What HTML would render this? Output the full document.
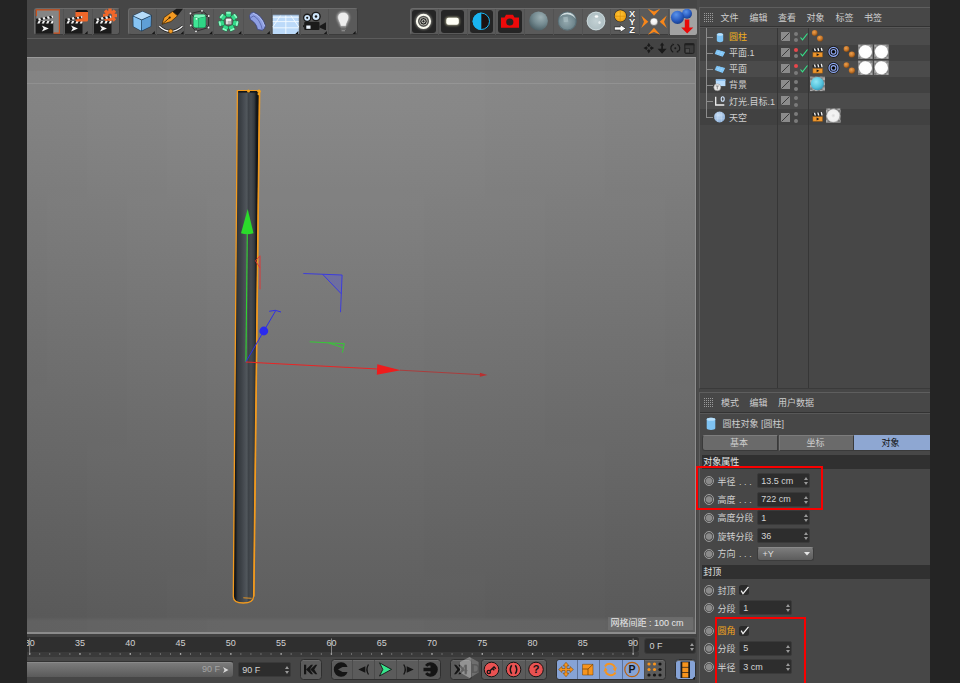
<!DOCTYPE html>
<html lang="zh">
<head>
<meta charset="utf-8">
<title>C4D</title>
<style>
*{box-sizing:border-box;margin:0;padding:0}
html,body{width:960px;height:683px;overflow:hidden;background:#242424}
body{position:relative;font-family:"Liberation Sans","Noto Sans CJK SC",sans-serif;font-size:9px;color:#cdcdcd;line-height:1}
.abs{position:absolute}
#app{position:absolute;left:27px;top:0;width:903px;height:683px;background:#464646;overflow:hidden}
/* coordinates inside #app are offset by -27 in x ; use .g wrapper to keep page coords */
#g{position:absolute;left:-27px;top:0;width:960px;height:683px}
.grp{position:absolute;top:7.5px;height:27.5px;background:#5a5a5a;border:1px solid #6b6b6b;border-bottom-color:#3c3c3c;border-right-color:#3c3c3c;border-radius:3px}
.grp i{position:absolute;top:0;width:1px;height:26px;background:#525252;border-right:0}
.blk{position:absolute;top:1.700px;width:23.300px;height:22.800px;background:#252525;border-radius:3px}
#vp{position:absolute;left:27px;top:57px;width:669.300px;height:575px;background:linear-gradient(to right,rgba(0,0,0,0.030),rgba(255,255,255,0.012) 30%,rgba(255,255,255,0.012) 55%,rgba(0,0,0,0.030)),linear-gradient(#848484 0,#848484 13px,#888 13px,#888 25.300px,#959595 25.300px,#959595 26.300px,#888 26.300px,#878787 50px,#5c5c5c 559px,#646464 563px,#646464 574px);overflow:hidden;border-top:1px solid #9a9a9a;border-right:1px solid #8e8e8e}
.t{position:absolute;white-space:nowrap;margin-top:0.700px}.t0{margin-top:0}
.row{position:absolute;left:700px;width:230px;height:16px}
.fld{position:absolute;background:#2d2d2d;border:1px solid #3a3a3a;border-radius:2px;height:15px;color:#d4d4d4}
.fld span{position:absolute;left:3.300px;top:2.700px}
.sp{position:absolute;right:1.200px;top:3px;width:4px;height:8px}
.rad{position:absolute;width:10.600px;height:10.600px;border-radius:50%;border:1.200px solid #9e9e9e;background:radial-gradient(circle,#8a8a8a 0,#8a8a8a 2.800px,#4a4a4a 3.700px,#4a4a4a 100%)}
.tb{position:absolute;top:658.700px;height:21.300px;background:#5b5b5b;border:1px solid #2f2f2f;border-radius:3.500px;overflow:hidden;box-shadow:inset 0 1px 0 #6b6b6b}
.tb i{position:absolute;top:0;width:1px;height:20px;background:#4c4c4c}
</style>
</head>
<body>
<div id="app"><div id="g">

<!-- TOP TOOLBAR -->
<div class="abs" style="left:27px;top:38px;width:670px;height:1px;background:#5c5c5c"></div>
<div class="abs" style="left:27px;top:39px;width:670px;height:18px;background:#434343"></div>
<div class="grp" id="g1" style="left:34px;width:85.5px"><i style="left:28px"></i><i style="left:57px"></i></div>
<div class="grp" id="g2" style="left:128px;width:230px"><i style="left:26.500px"></i><i style="left:55.200px"></i><i style="left:84.300px"></i><i style="left:113.500px"></i><i style="left:141.800px"></i><i style="left:170.500px"></i><i style="left:199.300px"></i></div>
<div class="grp" id="g3" style="left:409.5px;width:287px"><i style="left:27.300px"></i><i style="left:56px"></i><i style="left:84.800px"></i><i style="left:113.500px"></i><i style="left:142.200px"></i><i style="left:171px"></i><i style="left:199.800px"></i><i style="left:228.500px"></i><i style="left:257.800px"></i>
<div class="blk" style="left:1.800px"></div><div class="blk" style="left:30.500px"></div><div class="blk" style="left:59.200px"></div><div class="blk" style="left:87.900px"></div>
<div class="abs" style="left:259px;top:0;width:27px;height:26px;background:#a2a2a2;border-radius:0 2px 2px 0"></div>
</div>


<svg class="abs" style="left:0;top:0" width="700" height="57" viewBox="0 0 700 57">
<defs>
<g id="clap">
<rect x="0" y="8" width="17.5" height="10.5" fill="#1b1b1b"/>
<path d="M0 3.6L17 0.2L17.5 2.6L0.5 6Z" fill="#1b1b1b"/>
<path d="M2.2 3.2L4.4 2.7L5.4 5L3.2 5.5ZM6.6 2.3L8.8 1.9L9.8 4.1L7.6 4.6ZM11 1.4L13.2 1L14.2 3.2L12 3.7ZM15.2 .6L17 .2L17.5 2.6L16.4 2.8Z" fill="#f2f2f2"/>
<rect x="0" y="5.8" width="17.5" height="2.4" fill="#1b1b1b"/>
<path d="M1.5 8.2L2.7 5.8H4.9L3.7 8.2ZM5.9 8.2L7.1 5.8H9.3L8.1 8.2ZM10.3 8.2L11.5 5.8H13.7L12.5 8.2ZM14.7 8.2L15.9 5.8H17.5V7L17 8.2Z" fill="#f2f2f2"/>
<path d="M6 10.4L13 13.3L6 16.2L7.8 13.3Z" fill="#f4f4f4"/>
</g>
<path id="tri" d="M-1.200 3.200L1.800 0.200V3.200Z" fill="#161616"/>
<radialGradient id="sp1" cx="0.62" cy="0.3" r="0.8"><stop offset="0" stop-color="#9db0b4"/><stop offset="0.5" stop-color="#748a90"/><stop offset="1" stop-color="#43565c"/></radialGradient>
<radialGradient id="sp2" cx="0.45" cy="0.55" r="0.6"><stop offset="0" stop-color="#93a8ae"/><stop offset="0.7" stop-color="#71888f"/><stop offset="1" stop-color="#546a72"/></radialGradient>
<radialGradient id="sp3" cx="0.5" cy="0.5" r="0.55"><stop offset="0" stop-color="#c3d1d4"/><stop offset="0.75" stop-color="#b0c0c4"/><stop offset="1" stop-color="#8fa2a8"/></radialGradient>
<radialGradient id="spo" cx="0.45" cy="0.4" r="0.6"><stop offset="0" stop-color="#ffc83a"/><stop offset="1" stop-color="#f0a010"/></radialGradient>
<radialGradient id="spb" cx="0.4" cy="0.3" r="0.75"><stop offset="0" stop-color="#5b93ea"/><stop offset="0.6" stop-color="#2a5cc0"/><stop offset="1" stop-color="#153a85"/></radialGradient>
<radialGradient id="spw" cx="0.45" cy="0.35" r="0.7"><stop offset="0" stop-color="#fff"/><stop offset="0.6" stop-color="#f0f0f0"/><stop offset="1" stop-color="#a8a8a8"/></radialGradient>
<filter id="glow" x="-50%" y="-50%" width="200%" height="200%"><feGaussianBlur stdDeviation="1.1"/></filter>
</defs>
<!-- group1 -->
<rect x="36.4" y="9.8" width="23" height="23.4" fill="#858585"/>
<path d="M36.4 16V9.8H59.4V33.2H53.5" fill="none" stroke="#c9501c" stroke-width="1.2"/>
<use href="#clap" x="35.8" y="15.2"/>
<use href="#clap" x="65" y="15.200"/>
<rect x="75.500" y="10" width="12.500" height="11.500" rx="1.500" fill="#f0672a"/>
<path d="M75.500 12V11.500Q75.500 10 77 10H86.500Q88 10 88 11.500V12Z" fill="#151515"/>
<path d="M75.500 17.300L82.300 16V18.200L75.500 19.500Z" fill="#1b1b1b"/><path d="M76.800 17L78.600 16.700L79.400 18.600L77.600 18.900ZM80.600 16.300L82.300 16V18.200L81.400 18.300Z" fill="#f2f2f2"/>
<use href="#tri" x="85.800" y="30.800"/>
<g transform="translate(110 15.500)" fill="#f0672a">
<circle r="5"/>
<g id="teeth"><rect x="-1.700" y="-7" width="3.400" height="3"/><rect x="-1.700" y="4" width="3.400" height="3"/><rect x="-7" y="-1.700" width="3" height="3.400"/><rect x="4" y="-1.700" width="3" height="3.400"/></g>
<use href="#teeth" transform="rotate(45)"/>
<circle r="1.900" fill="#5c5c5c"/>
</g>
<use href="#clap" x="94" y="15.200"/>
<!-- group2 : cube -->
<path d="M132.600 15.500L142.500 10.900L151.700 15L151.300 26.500L141.500 31.500L132.800 26.800Z" fill="#1d3c58"/>
<path d="M133.300 15.700L142.500 11.600L151 15.200L141.700 19.600Z" fill="#b5dcfa"/>
<path d="M133.300 16.500L141.300 20.300L141.200 30.700L133.500 26.400Z" fill="#86c4f4"/>
<path d="M142 20.300L151 16L150.700 26.200L142 30.600Z" fill="#5f9fd6"/>
<use href="#tri" x="153" y="30.800"/>
<!-- pen -->
<path d="M172.500 11.500L176.500 8.800H183L177.500 15.800Z" fill="#1a1a1a"/>
<path d="M172.500 11.500L177.500 15.800L171 21.500L162 24.300L164 17.500Z" fill="#f39a23" stroke="#3a2508" stroke-width="0.700"/>
<path d="M162.300 24L169.500 17.800" stroke="#3a2508" stroke-width="0.900" fill="none"/>
<circle cx="169.700" cy="17.600" r="1.100" fill="#3a2508"/>
<path d="M159.300 26.200Q170.500 36.500 182.500 26.200" fill="none" stroke="#1c1c1c" stroke-width="2.600"/>
<path d="M159.300 26.200Q170.500 36.500 182.500 26.200" fill="none" stroke="#f4f4f4" stroke-width="1.500"/>
<circle cx="170.700" cy="31.200" r="2.200" fill="#f39a23" stroke="#3a2508" stroke-width="0.600"/>
<use href="#tri" x="181.800" y="30.800"/>
<!-- green cube with cage -->
<path d="M190.500 13.500L202 10.800L208.700 16L208.500 27.500L196 31.300L190.800 25.500ZM190.500 13.500L196.500 18.800L196 31.300M196.500 18.800L208.700 16M202 10.800V22L208.500 27.500M202 22L190.800 25.500" fill="none" stroke="#2b2b2b" stroke-width="0.900"/>
<rect x="193.300" y="14.300" width="12.600" height="13.600" rx="2.500" fill="#1a7a4c"/>
<path d="M194 16Q194 14.600 196 14.600H203.500Q205.500 14.600 205.500 16.500L198.500 18L194 17Z" fill="#7df5bb"/>
<path d="M193.600 17L198.500 18.300V27.600H195.500Q193.600 27.600 193.600 25.500Z" fill="#3fe695"/>
<path d="M199 18.300L205.600 16.800V25.500Q205.600 27.600 203.500 27.600H199Z" fill="#2fd585"/>
<g fill="#f4f4f4"><circle cx="190.500" cy="13.500" r="0.900"/><circle cx="202" cy="10.800" r="0.900"/><circle cx="208.700" cy="16" r="0.900"/><circle cx="196.500" cy="18.800" r="0.900"/><circle cx="196" cy="31.300" r="0.900"/><circle cx="208.500" cy="27.500" r="0.900"/><circle cx="190.800" cy="25.500" r="0.900"/></g>
<use href="#tri" x="210.500" y="30.800"/>
<!-- array cluster -->
<g transform="translate(228.5 21.600)">
<g id="gcs">
<g transform="translate(0 -7.300)"><rect x="-2.900" y="-2.900" width="5.800" height="5.800" rx="1.200" fill="#157a46"/><rect x="-2.400" y="-2.500" width="4.800" height="2.200" rx="0.800" fill="#8af8c4"/><rect x="-2.400" y="-0.500" width="4.800" height="3" rx="0.800" fill="#34da8a"/></g>
</g>
<use href="#gcs" transform="rotate(51.400)"/><use href="#gcs" transform="rotate(102.800)"/><use href="#gcs" transform="rotate(154.300)"/><use href="#gcs" transform="rotate(205.700)"/><use href="#gcs" transform="rotate(257.100)"/><use href="#gcs" transform="rotate(308.600)"/>
<rect x="-2.900" y="-3.200" width="6" height="6.200" rx="1" fill="#8a8a8a"/><rect x="-2.500" y="-2.900" width="5.200" height="2.400" rx="0.700" fill="#f2f2f2"/><rect x="-2.500" y="-0.700" width="2.600" height="3.300" fill="#dadada"/><rect x="0.100" y="-0.700" width="2.600" height="3.300" fill="#b5b5b5"/>
</g>
<use href="#tri" x="239.500" y="30.800"/>
<!-- bend -->
<path d="M249.500 15.500Q250.500 12.300 253.500 12.300Q262 15 265.300 25.500Q265.500 28.500 262.500 30.300L257.500 29.500Q256.500 23 250 19.300Z" fill="#8e9fe3" stroke="#3b447c" stroke-width="0.800"/>
<path d="M250 19.300Q251 16.300 253.800 16Q260 19 262.500 30.300" fill="none" stroke="#5461a8" stroke-width="0.800"/>
<path d="M253.500 12.300Q262 15 265.300 25.500" fill="none" stroke="#bac6f5" stroke-width="0.800" transform="translate(-0.600 0.900)"/>
<use href="#tri" x="268" y="30.800"/>
<!-- floor -->
<rect x="272.800" y="15" width="26" height="19" fill="#bcdaf9"/>
<path d="M272.800 17.200H298.800M272.800 21.600H298.800M272.800 27.800H298.800M285.800 15V34M281 15L272.800 27M290.500 15L298.800 27" stroke="#f4faff" stroke-width="0.900" fill="none"/>
<path d="M272.800 15H298.800" stroke="#7d95b0" stroke-width="0.800"/>
<use href="#tri" x="296.500" y="30.800"/>
<!-- camera -->
<circle cx="307.200" cy="17.800" r="4.200" fill="#1a1a1a"/><circle cx="316" cy="16.500" r="4.800" fill="#1a1a1a"/>
<circle cx="307.200" cy="17.800" r="2.900" fill="#cfe6fb"/><circle cx="316" cy="16.500" r="3.400" fill="#cfe6fb"/>
<circle cx="307.200" cy="17.800" r="1.100" fill="#1a1a1a"/><circle cx="316" cy="16.500" r="1.300" fill="#1a1a1a"/>
<rect x="304.200" y="21.800" width="15.300" height="8.200" rx="1.200" fill="#1a1a1a"/>
<path d="M319.500 26L326 22.300V30H325L319.500 27.500Z" fill="#1a1a1a"/>
<path d="M303 25.500L304.500 24.500V27.500L303 27Z" fill="#1a1a1a"/>
<rect x="306.300" y="25.500" width="4.200" height="3.300" fill="#eaf2fb"/>
<use href="#tri" x="325" y="30.800"/>
<!-- bulb -->
<path d="M343.200 11.500C347.500 11.500 349.800 14.500 349.500 18C349.200 21.300 346.800 23 346.500 26.300H340C339.700 23 337.200 21.300 337 18C336.700 14.500 339 11.500 343.200 11.500Z" fill="#fff" filter="url(#glow)" opacity="0.550"/>
<path d="M343.200 12.300C347 12.300 349 15 348.800 18C348.500 21 346.300 22.800 346 26.300H340.500C340.200 22.800 338 21 337.700 18C337.500 15 339.500 12.300 343.200 12.300Z" fill="#ededed" stroke="#7a7a7a" stroke-width="0.500"/>
<path d="M340.600 27.200H346M340.800 29H345.800M341.500 30.700H345" stroke="#9c9c9c" stroke-width="1.200" fill="none"/>
<path d="M340.600 28.100H346M341 29.900H345.500" stroke="#4a4a4a" stroke-width="0.600" fill="none"/>
<use href="#tri" x="353.800" y="30.800"/>
<!-- group3 icons -->
<g fill="none" stroke="#fbfbf0">
<circle cx="423.500" cy="21.300" r="6.600" stroke-width="3.600" opacity="0.400" filter="url(#glow)"/>
<circle cx="423.500" cy="21.300" r="6.600" stroke-width="2"/>
<circle cx="423.500" cy="21.300" r="3.800" stroke-width="1" stroke="#b9b9ae"/>
<circle cx="423.500" cy="21.300" r="1.600" stroke-width="1" stroke="#dcdcd2"/>
</g>
<rect x="445.500" y="17" width="14" height="8.500" rx="3" fill="#f0eec0" filter="url(#glow)" opacity="0.600"/>
<rect x="446.300" y="17.800" width="12.500" height="7" rx="2.200" fill="#fffff6"/>
<circle cx="481.300" cy="21.300" r="8.200" fill="#1c1210" stroke="#19b4f0" stroke-width="1"/>
<path d="M481.300 12.600A8.700 8.700 0 0 0 481.300 30Z" fill="#19b4f0"/>
<path d="M501 17.500H504.500L506 14.800H513L514.500 17.500H519V27.800H501Z" fill="#ee0a0a"/>
<circle cx="509.800" cy="22" r="3.600" fill="#252525"/>
<circle cx="538.500" cy="21" r="9.400" fill="url(#sp1)"/>
<circle cx="567.300" cy="21" r="9.400" fill="url(#sp2)"/>
<path d="M559.500 17Q563 11.500 570 12.500Q575 14 576 19.500Q573 14.500 567 14.300Q562 14.500 559.500 17Z" fill="#e4eef0" opacity="0.850"/>
<rect x="563.500" y="17" width="4.500" height="5" fill="#a9bdc2" opacity="0.700" transform="rotate(-8 566 19.500)"/>
<circle cx="567.300" cy="21" r="9" fill="none" stroke="#4e636a" stroke-width="0.900" opacity="0.700"/>
<circle cx="596" cy="21" r="9.400" fill="url(#sp3)"/>
<circle cx="596" cy="21" r="8.800" fill="none" stroke="#dfe9eb" stroke-width="0.900" opacity="0.700"/>
<ellipse cx="596.500" cy="16.500" rx="1.800" ry="1.200" fill="#fff" opacity="0.900"/><ellipse cx="599.500" cy="22.500" rx="1.200" ry="1.500" fill="#eef4f5" opacity="0.800"/>
<circle cx="620.400" cy="15.900" r="6.300" fill="#2a2a2a"/>
<circle cx="620.400" cy="15.900" r="5.700" fill="url(#spo)"/>
<path d="M614.700 16.200H626.100M620.200 10.200V21.600" stroke="#d98a08" stroke-width="0.700"/>
<path d="M614.400 26.900H620.300V24.700L626 28.500L620.300 32.300V30.100H614.400Z" fill="#fafafa" stroke="#2a2a2a" stroke-width="0.700"/>
<g font-family="Liberation Sans, sans-serif" font-weight="bold" font-size="9.400" fill="#fafafa" stroke="#2a2a2a" stroke-width="0.700" paint-order="stroke" text-anchor="middle"><text x="632.200" y="16.600">X</text><text x="632.200" y="24.600">Y</text><text x="632.200" y="32.700">Z</text></g>
<!-- icon 9 -->
<g fill="#f7861a">
<path d="M647.800 8.800L654 11.600L660.200 8.800L654 15.800Z"/>
<path d="M647.800 34.700L654 31.900L660.200 34.700L654 27.700Z"/>
<path d="M641.200 15.500L644 21.800L641.200 28L648.300 21.800Z"/>
<path d="M666.800 15.500L664 21.800L666.800 28L659.700 21.800Z"/>
</g>
<circle cx="654" cy="21.800" r="3.900" fill="url(#spw)" stroke="#555" stroke-width="0.500"/>
<!-- icon 10 -->
<circle cx="687" cy="13.800" r="5" fill="url(#spb)"/>
<circle cx="677.500" cy="17.300" r="6.600" fill="url(#spb)"/>
<path d="M684.800 19.500H689.300V27.600H693.300L687.200 33.500L681.200 27.600H684.800Z" fill="#e80a0a"/>
<!-- viewport header icons -->
<g fill="#1a1a1a">
<path d="M648.800 42.800L650.600 45.800L648.800 47L647 45.800ZM648.800 53.400L650.600 50.400L648.800 49.200L647 50.400ZM643.500 48.100L646.500 46.300L647.700 48.100L646.500 49.900ZM654.100 48.100L651.100 46.300L649.900 48.100L651.100 49.900Z"/>
<path d="M662.100 42.600L664.300 45.600H662.900V48.800H666.600L662.100 53.800L657.600 48.800H661.300V45.600H659.900Z"/>
<circle cx="675.300" cy="48.200" r="1"/>
</g>
<g fill="none" stroke="#1a1a1a" stroke-width="1.200"><path d="M672.200 45A4.500 4.500 0 0 0 673.200 52.200"/><path d="M678.400 51.400A4.500 4.500 0 0 0 677.400 44.200"/></g>
<path d="M672.300 43.600L674.300 44.300L672.600 46.200ZM678.300 52.800L676.300 52.100L678 50.200Z" fill="#1a1a1a"/>
<rect x="684.800" y="43.800" width="9.200" height="9.600" rx="1.200" fill="#3c3c3c" stroke="#202020" stroke-width="1"/>
<path d="M684.500 43.300H694.300V45.300H684.500Z" fill="#202020"/>
<rect x="685.300" y="48.600" width="4.200" height="4.300" fill="#4c4c4c" stroke="#262626" stroke-width="0.700"/>
</svg>
<!-- VIEWPORT -->
<div id="vp">
<svg class="abs" style="left:-27px;top:-58px" width="700" height="640" viewBox="0 0 700 640">
<defs>
<linearGradient id="cyl" x1="0" x2="1" y1="0" y2="0">
<stop offset="0" stop-color="#0f1113"/><stop offset="0.080" stop-color="#15181b"/><stop offset="0.170" stop-color="#33383d"/><stop offset="0.300" stop-color="#3c4146"/><stop offset="0.440" stop-color="#4a4f55"/><stop offset="0.520" stop-color="#51575c"/><stop offset="0.580" stop-color="#3d4247"/><stop offset="0.680" stop-color="#454a4f"/><stop offset="0.800" stop-color="#363b40"/><stop offset="0.880" stop-color="#16191c"/><stop offset="1" stop-color="#0b0d0f"/>
</linearGradient>
</defs>
<!-- cylinder -->
<path d="M237.400 90.600L259.400 90.600L253.600 596.500Q253.200 603 243.300 603Q233.300 603 233.300 596.500Z" fill="url(#cyl)" stroke="#f29a1e" stroke-width="1.300" stroke-linejoin="round"/>
<path d="M243.300 597.800L251.600 598.300" stroke="#f29a1e" stroke-width="0.900"/><path d="M259.700 92L254 596.500" stroke="#f29a1e" stroke-width="1.300"/><path d="M238.300 91.800H258.600" stroke="#14171a" stroke-width="1.600"/>
<circle cx="248.500" cy="91" r="1.500" fill="#f6a51e"/><circle cx="259" cy="91.300" r="1.700" fill="#f6a51e"/><circle cx="258.700" cy="94" r="1.200" fill="#f6a51e"/>
<!-- green axis -->
<path d="M247.300 233L245.900 362" stroke="#2fd22f" stroke-width="1.100"/>
<path d="M247.700 209L253.500 233.300Q247.300 235 241 233.300Z" fill="#2bdb2b"/>
<!-- red bracket -->
<path d="M260 289.300V255.800L255.500 260.800L260 268" fill="none" stroke="#e63232" stroke-width="0.900"/>
<!-- blue bracket -->
<path d="M322.600 274.300L342 275L341.200 293.700Z" fill="#5a5ae0" opacity="0.350"/>
<path d="M303.300 273.500L342.100 275L340.500 312.200M322.600 274.300L341.200 293.700" fill="none" stroke="#3636e6" stroke-width="0.900"/>
<!-- blue axis -->
<path d="M245.800 362L275.800 310.500M269.200 311.300Q275.500 309 281 312" fill="none" stroke="#2f2fe6" stroke-width="1"/>
<circle cx="263.800" cy="331" r="4.400" fill="#2a2aee"/>
<!-- green bracket -->
<path d="M309.700 341.800L344.300 343.700L342.400 352.600M328.500 342.900L342.900 347.600" fill="none" stroke="#2fd22f" stroke-width="0.900"/>
<!-- red axis -->
<path d="M245.800 362L378 369" stroke="#ea2424" stroke-width="1.100"/>
<path d="M377.300 364.200L400.600 370.200L376.800 374.800Z" fill="#ee1c1c"/>
<path d="M400 370.200L481 374.700" stroke="#b83030" stroke-width="0.800"/>
<path d="M480 372.700L487.500 375L479.800 376.700Z" fill="#b83030"/>
</svg>
<div class="abs" style="left:581px;top:558.500px;width:85px;height:13px;background:#787878;opacity:0.550"></div>
<div class="t t0" style="left:583.500px;top:561px;color:#e8e8e8">网格间距 : 100 cm</div>
</div>

<!-- TIMELINE -->
<div class="abs" style="left:27px;top:632px;width:669.300px;height:1.700px;background:#8c8c8c"></div>
<div class="abs" style="left:27px;top:634px;width:670px;height:2.5px;background:#414141"></div>
<div class="abs" id="ruler" style="left:27px;top:636.5px;width:612px;height:15px;background:#2f2f2f;border-radius:0 3px 3px 0"></div>
<div class="abs" style="left:27px;top:651.5px;width:612px;height:5px;background:#3a3a3a;border-radius:0 0 3px 0"></div>
<div class="abs" style="left:27px;top:661px;width:206px;height:1px;background:#333"></div>


<!-- ruler ticks and numbers -->
<svg class="abs" style="left:27px;top:636px" width="613" height="22" viewBox="27 636 613 22">
<rect x="29.05" y="653.300" width="1.300" height="1.300" fill="#dcdcdc"/><rect x="39.26" y="653.500" width="0.900" height="1" fill="#a8a8a8"/><rect x="49.31" y="653.500" width="0.900" height="1" fill="#a8a8a8"/><rect x="59.37" y="653.500" width="0.900" height="1" fill="#a8a8a8"/><rect x="69.43" y="653.500" width="0.900" height="1" fill="#a8a8a8"/><rect x="79.33" y="653.300" width="1.300" height="1.300" fill="#dcdcdc"/><rect x="89.54" y="653.500" width="0.900" height="1" fill="#a8a8a8"/><rect x="99.60" y="653.500" width="0.900" height="1" fill="#a8a8a8"/><rect x="109.66" y="653.500" width="0.900" height="1" fill="#a8a8a8"/><rect x="119.71" y="653.500" width="0.900" height="1" fill="#a8a8a8"/><rect x="129.62" y="653.300" width="1.300" height="1.300" fill="#dcdcdc"/><rect x="139.83" y="653.500" width="0.900" height="1" fill="#a8a8a8"/><rect x="149.88" y="653.500" width="0.900" height="1" fill="#a8a8a8"/><rect x="159.94" y="653.500" width="0.900" height="1" fill="#a8a8a8"/><rect x="170.00" y="653.500" width="0.900" height="1" fill="#a8a8a8"/><rect x="179.91" y="653.300" width="1.300" height="1.300" fill="#dcdcdc"/><rect x="190.11" y="653.500" width="0.900" height="1" fill="#a8a8a8"/><rect x="200.17" y="653.500" width="0.900" height="1" fill="#a8a8a8"/><rect x="210.23" y="653.500" width="0.900" height="1" fill="#a8a8a8"/><rect x="220.28" y="653.500" width="0.900" height="1" fill="#a8a8a8"/><rect x="230.19" y="653.300" width="1.300" height="1.300" fill="#dcdcdc"/><rect x="240.40" y="653.500" width="0.900" height="1" fill="#a8a8a8"/><rect x="250.45" y="653.500" width="0.900" height="1" fill="#a8a8a8"/><rect x="260.51" y="653.500" width="0.900" height="1" fill="#a8a8a8"/><rect x="270.57" y="653.500" width="0.900" height="1" fill="#a8a8a8"/><rect x="280.48" y="653.300" width="1.300" height="1.300" fill="#dcdcdc"/><rect x="290.68" y="653.500" width="0.900" height="1" fill="#a8a8a8"/><rect x="300.74" y="653.500" width="0.900" height="1" fill="#a8a8a8"/><rect x="310.80" y="653.500" width="0.900" height="1" fill="#a8a8a8"/><rect x="320.85" y="653.500" width="0.900" height="1" fill="#a8a8a8"/><rect x="330.76" y="653.300" width="1.300" height="1.300" fill="#dcdcdc"/><rect x="340.97" y="653.500" width="0.900" height="1" fill="#a8a8a8"/><rect x="351.02" y="653.500" width="0.900" height="1" fill="#a8a8a8"/><rect x="361.08" y="653.500" width="0.900" height="1" fill="#a8a8a8"/><rect x="371.14" y="653.500" width="0.900" height="1" fill="#a8a8a8"/><rect x="381.04" y="653.300" width="1.300" height="1.300" fill="#dcdcdc"/><rect x="391.25" y="653.500" width="0.900" height="1" fill="#a8a8a8"/><rect x="401.31" y="653.500" width="0.900" height="1" fill="#a8a8a8"/><rect x="411.37" y="653.500" width="0.900" height="1" fill="#a8a8a8"/><rect x="421.42" y="653.500" width="0.900" height="1" fill="#a8a8a8"/><rect x="431.33" y="653.300" width="1.300" height="1.300" fill="#dcdcdc"/><rect x="441.54" y="653.500" width="0.900" height="1" fill="#a8a8a8"/><rect x="451.59" y="653.500" width="0.900" height="1" fill="#a8a8a8"/><rect x="461.65" y="653.500" width="0.900" height="1" fill="#a8a8a8"/><rect x="471.71" y="653.500" width="0.900" height="1" fill="#a8a8a8"/><rect x="481.61" y="653.300" width="1.300" height="1.300" fill="#dcdcdc"/><rect x="491.82" y="653.500" width="0.900" height="1" fill="#a8a8a8"/><rect x="501.88" y="653.500" width="0.900" height="1" fill="#a8a8a8"/><rect x="511.94" y="653.500" width="0.900" height="1" fill="#a8a8a8"/><rect x="521.99" y="653.500" width="0.900" height="1" fill="#a8a8a8"/><rect x="531.90" y="653.300" width="1.300" height="1.300" fill="#dcdcdc"/><rect x="542.11" y="653.500" width="0.900" height="1" fill="#a8a8a8"/><rect x="552.16" y="653.500" width="0.900" height="1" fill="#a8a8a8"/><rect x="562.22" y="653.500" width="0.900" height="1" fill="#a8a8a8"/><rect x="572.28" y="653.500" width="0.900" height="1" fill="#a8a8a8"/><rect x="582.19" y="653.300" width="1.300" height="1.300" fill="#dcdcdc"/><rect x="592.39" y="653.500" width="0.900" height="1" fill="#a8a8a8"/><rect x="602.45" y="653.500" width="0.900" height="1" fill="#a8a8a8"/><rect x="612.51" y="653.500" width="0.900" height="1" fill="#a8a8a8"/><rect x="622.56" y="653.500" width="0.900" height="1" fill="#a8a8a8"/><rect x="632.47" y="653.300" width="1.300" height="1.300" fill="#dcdcdc"/><rect x="29.30" y="638.500" width="0.800" height="15.500" fill="#9a9a9a"/><rect x="331.01" y="638.500" width="0.800" height="15.500" fill="#9a9a9a"/><rect x="632.72" y="638.500" width="0.800" height="15.500" fill="#9a9a9a"/></svg>
<div class="t" style="left:19.7px;top:638.700px;width:20px;text-align:center;color:#d2d2d2;margin-top:0">30</div>
<div class="t" style="left:70.0px;top:638.700px;width:20px;text-align:center;color:#d2d2d2;margin-top:0">35</div>
<div class="t" style="left:120.3px;top:638.700px;width:20px;text-align:center;color:#d2d2d2;margin-top:0">40</div>
<div class="t" style="left:170.6px;top:638.700px;width:20px;text-align:center;color:#d2d2d2;margin-top:0">45</div>
<div class="t" style="left:220.8px;top:638.700px;width:20px;text-align:center;color:#d2d2d2;margin-top:0">50</div>
<div class="t" style="left:271.1px;top:638.700px;width:20px;text-align:center;color:#d2d2d2;margin-top:0">55</div>
<div class="t" style="left:321.4px;top:638.700px;width:20px;text-align:center;color:#d2d2d2;margin-top:0">60</div>
<div class="t" style="left:371.7px;top:638.700px;width:20px;text-align:center;color:#d2d2d2;margin-top:0">65</div>
<div class="t" style="left:422.0px;top:638.700px;width:20px;text-align:center;color:#d2d2d2;margin-top:0">70</div>
<div class="t" style="left:472.3px;top:638.700px;width:20px;text-align:center;color:#d2d2d2;margin-top:0">75</div>
<div class="t" style="left:522.6px;top:638.700px;width:20px;text-align:center;color:#d2d2d2;margin-top:0">80</div>
<div class="t" style="left:572.8px;top:638.700px;width:20px;text-align:center;color:#d2d2d2;margin-top:0">85</div>
<div class="t" style="left:623.1px;top:638.700px;width:20px;text-align:center;color:#d2d2d2;margin-top:0">90</div>
<div class="abs" style="left:27px;top:662px;width:206px;height:14.500px;background:linear-gradient(#7b7b7b,#5a5a5a);border-radius:0 3px 3px 0;border-top:1px solid #8a8a8a"></div>
<div class="t t0" style="left:202px;top:665.300px;color:#a4a4a4">90 F</div>
<svg class="abs" style="left:223px;top:666.500px" width="6" height="6" viewBox="0 0 6 6"><path d="M0 0L5.500 3L0 6L1.500 3Z" fill="#d8d8d8"/></svg>
<div class="fld" style="left:238px;top:661.500px;width:53px;height:15.500px"><span style="top:3px">90 F</span><svg class="sp" viewBox="0 0 4 8"><path d="M0 3L2 0L4 3ZM0 5L2 8L4 5Z" fill="#9a9a9a"/></svg></div>
<div class="fld" style="left:643.500px;top:638px;width:52.500px;height:16px;border-radius:3px"><span style="top:2.700px;left:5px">0 F</span><svg class="sp" style="top:4px" viewBox="0 0 4 8"><path d="M0 3L2 0L4 3ZM0 5L2 8L4 5Z" fill="#9a9a9a"/></svg></div>
<div class="tb" style="left:299.500px;width:22px"></div>
<div class="tb" style="left:330.500px;width:110.500px"><i style="left:20px"></i><i style="left:42px"></i><i style="left:64.500px"></i><i style="left:86.500px"></i></div>
<div class="tb" style="left:449.500px;width:22px"></div>
<div class="tb" style="left:480.500px;width:66px"><i style="left:20.500px"></i><i style="left:43px"></i></div>
<div class="tb" style="left:555.500px;width:110.500px"><b style="position:absolute;left:0;top:0;width:87.500px;height:20px;background:#86a3d6"></b><i style="left:20.500px;background:#5d7298"></i><i style="left:42.500px;background:#5d7298"></i><i style="left:65px;background:#5d7298"></i><i style="left:87px"></i></div>
<div class="tb" style="left:674.500px;width:21.500px;background:#86a3d6"></div>
<svg class="abs" style="left:290px;top:655px" width="410" height="28" viewBox="290 655 410 28">
<g fill="#151515">
<rect x="304" y="664.700" width="2.200" height="9.600"/><path d="M306 669.500L311 664.700H313L310 669.500L313 674.300H311ZM310.300 669.500L315.300 664.700H317.300L314.300 669.500L317.300 674.300H315.300Z"/>
<path d="M346.300 664.600A7.200 7.200 0 1 0 346.300 674.400L347.500 672H342.500L338 669.500L342.500 667H347.500Z"/>
<path d="M358.300 669.500L365.300 666.300V672.700Z"/><path d="M368.500 664.500Q365.300 669.500 368.500 674.500" fill="none" stroke="#151515" stroke-width="1.300"/>
<path d="M406.700 666.300L413.700 669.500L406.700 672.700Z"/><path d="M403.700 664.500Q406.900 669.500 403.700 674.500" fill="none" stroke="#151515" stroke-width="1.300"/>
<path d="M425 665A7.200 7.200 0 1 1 425 674L427.300 672.200A4 4 0 0 0 431 673.300V671.300H423.500V667.700H431V665.700A4 4 0 0 0 427.300 666.800Z"/><path d="M430.500 664.300L437.300 669.500L430.500 674.700Z"/>
<path d="M454 664.700H456L460.500 669.500L456 674.300H454L457.300 669.500ZM458.300 664.700H460.300L464.800 669.500L460.300 674.300H458.300L461.600 669.500Z"/><rect x="464.600" y="664.700" width="2.200" height="9.600"/>
</g>
<path d="M379.500 662.800L391.500 669.400L379.500 676L382.800 669.400Z" fill="#36e58c" stroke="#151515" stroke-width="0.900" stroke-linejoin="round"/>
<g stroke="#151515" stroke-width="1" fill="#ea5252"><circle cx="491.500" cy="669.500" r="7.300"/><circle cx="513.500" cy="669.500" r="7.300"/><circle cx="536" cy="669.500" r="7.300"/></g>
<g fill="none" stroke="#151515" stroke-width="1.400"><circle cx="488.800" cy="672" r="1.600"/><path d="M490 670.800L494.500 666.500M492.500 668.400L494.300 670.200M494 666.900L495.800 668.700"/>
<path d="M511.700 665.300Q508.800 669.500 511.700 673.700M515.300 665.300Q518.200 669.500 515.300 673.700" stroke-width="1.500"/></g>
<text x="536" y="673.300" text-anchor="middle" font-family="Liberation Sans, sans-serif" font-weight="bold" font-size="11" fill="#151515">?</text>
<g fill="#f7941d" stroke="#6a3c06" stroke-width="0.500">
<path d="M566 662.300L569 665.800H567V668.500H570V666.500L573.400 669.500L570 672.500V670.500H567V673.200H569L566 676.700L563 673.200H565V670.500H562V672.500L558.600 669.500L562 666.500V668.500H565V665.800H563Z"/>
<path d="M582.500 664.300H593V675H582.500Z"/>
</g>
<path d="M582.500 669H588V675M588 669L593 664.300" fill="none" stroke="#6a3c06" stroke-width="0.700"/>
<g fill="none" stroke="#f7941d" stroke-width="1.900"><path d="M605 666.500A5.500 5.500 0 0 1 615 667.800"/><path d="M615.500 672.500A5.500 5.500 0 0 1 605.500 671.200"/></g>
<path d="M612.700 668.800L617 667.300L615.300 671.800ZM607.800 670.300L603.500 671.700L605.200 667.200Z" fill="#f7941d"/>
<circle cx="632" cy="669.500" r="7.200" fill="none" stroke="#b9610e" stroke-width="1.200"/>
<text x="632" y="673.300" text-anchor="middle" font-family="Liberation Sans, sans-serif" font-weight="bold" font-size="10.500" fill="#151515">P</text>
<g fill="#f7941d"><circle cx="649" cy="664" r="1.600"/><circle cx="654.500" cy="664" r="1.600"/><circle cx="649" cy="669.500" r="1.600"/><circle cx="654.500" cy="669.500" r="1.600"/></g>
<g fill="#151515"><circle cx="660" cy="664" r="1.600"/><circle cx="660" cy="669.500" r="1.600"/><circle cx="649" cy="675" r="1.600"/><circle cx="654.500" cy="675" r="1.600"/><circle cx="660" cy="675" r="1.600"/></g>
<rect x="680.500" y="661.500" width="9.500" height="16.500" fill="#1c1c1c"/>
<g fill="#f7941d"><rect x="682.300" y="662.300" width="6" height="4.600"/><rect x="682.300" y="667.600" width="6" height="4.600"/><rect x="682.300" y="672.900" width="6" height="4.600"/></g>
<path d="M692 679.500L695 676.500V679.500Z" fill="#151515"/>
<!-- watermark -->
<path d="M469.500 657L471 657.800V677.200L469.500 678L460 672.500V662Z" fill="#fff" opacity="0.340"/>
<path d="M471 657.800L478.600 662V672.500L471 677.200Z" fill="#fff" opacity="0.220"/>
<g font-family="Liberation Sans, sans-serif" font-weight="bold" font-size="11.500" fill="#5e5e5e" opacity="0.600"><text x="461.300" y="672.500">4</text><text x="471.300" y="672.500" font-size="12" fill="#4e4e4e">D</text></g>
</svg>

<!-- PANEL DIVIDER -->
<div class="abs" style="left:696.5px;top:0;width:3px;height:683px;background:#4b4b4b"></div>
<!-- OBJECT MANAGER -->
<div class="abs" style="left:699px;top:7px;width:231px;height:381px;background:#474747;border-left:1px solid #5e5e5e;border-top:1px solid #5e5e5e"></div>
<div class="abs" style="left:700px;top:26px;width:230px;height:1px;background:#333"></div>
<div class="abs" style="left:700px;top:27px;width:230px;height:1px;background:#585858"></div>
<svg class="abs grip" style="left:704px;top:12.600px" width="11" height="11" viewBox="0 0 11 11"><g fill="#9a9a9a"><rect x="0" y="0" width="1" height="1"/><rect x="2" y="0" width="1" height="1"/><rect x="4" y="0" width="1" height="1"/><rect x="6" y="0" width="1" height="1"/><rect x="8" y="0" width="1" height="1"/><rect x="0" y="2" width="1" height="1"/><rect x="2" y="2" width="1" height="1"/><rect x="4" y="2" width="1" height="1"/><rect x="6" y="2" width="1" height="1"/><rect x="8" y="2" width="1" height="1"/><rect x="0" y="4" width="1" height="1"/><rect x="2" y="4" width="1" height="1"/><rect x="4" y="4" width="1" height="1"/><rect x="6" y="4" width="1" height="1"/><rect x="8" y="4" width="1" height="1"/><rect x="0" y="6" width="1" height="1"/><rect x="2" y="6" width="1" height="1"/><rect x="4" y="6" width="1" height="1"/><rect x="6" y="6" width="1" height="1"/><rect x="8" y="6" width="1" height="1"/><rect x="0" y="8" width="1" height="1"/><rect x="2" y="8" width="1" height="1"/><rect x="4" y="8" width="1" height="1"/><rect x="6" y="8" width="1" height="1"/><rect x="8" y="8" width="1" height="1"/></g></svg>
<div class="t" style="left:720.5px;top:13px">文件</div>
<div class="t" style="left:749.5px;top:13px">编辑</div>
<div class="t" style="left:778px;top:13px">查看</div>
<div class="t" style="left:806.5px;top:13px">对象</div>
<div class="t" style="left:835.5px;top:13px">标签</div>
<div class="t" style="left:864px;top:13px">书签</div>
<div class="abs" style="left:700px;top:28px;width:230px;height:360px;background:#474747"></div>
<div class="row" style="top:28.5px;background:#4b4b4b"></div>
<div class="row" style="top:44.6px;background:#414141"></div>
<div class="row" style="top:60.7px;background:#4b4b4b"></div>
<div class="row" style="top:76.8px;background:#414141"></div>
<div class="row" style="top:92.9px;background:#4b4b4b"></div>
<div class="row" style="top:109px;background:#414141"></div>
<div class="abs" style="left:706.100px;top:28px;width:1.200px;height:89.500px;background:#8c8c8c"></div>
<div class="abs" style="left:706px;top:36.5px;width:7px;height:1.200px;background:#8c8c8c"></div>
<div class="abs" style="left:706px;top:52.6px;width:7px;height:1.200px;background:#8c8c8c"></div>
<div class="abs" style="left:706px;top:68.7px;width:7px;height:1.200px;background:#8c8c8c"></div>
<div class="abs" style="left:706px;top:84.8px;width:7px;height:1.200px;background:#8c8c8c"></div>
<div class="abs" style="left:706px;top:100.9px;width:7px;height:1.200px;background:#8c8c8c"></div>
<div class="abs" style="left:706px;top:117px;width:7px;height:1.200px;background:#8c8c8c"></div>
<div class="abs" style="left:777px;top:28px;width:1px;height:360px;background:#363636"></div>
<div class="abs" style="left:808px;top:28px;width:1px;height:360px;background:#363636"></div>
<div class="t" style="left:729px;top:32.5px;color:#f0b020">圆柱</div>
<svg class="abs" style="left:781px;top:32.0px" width="9" height="9" viewBox="0 0 9 9"><rect width="9" height="9" fill="#8b8b8b"/><path d="M0.5 8.5L8.5 0.5" stroke="#3a3a3a" stroke-width="1"/></svg>
<div class="abs" style="left:794px;top:31.7px;width:4px;height:4px;border-radius:50%;background:#7b7b7b"></div>
<div class="abs" style="left:794px;top:38.3px;width:4px;height:4px;border-radius:50%;background:#7b7b7b"></div>
<svg class="abs" style="left:800px;top:33.0px" width="8" height="8" viewBox="0 0 8 8"><path d="M0.5 4.5L2.5 6.8L7.5 0.5" fill="none" stroke="#35e38a" stroke-width="1.1"/></svg>
<div class="t" style="left:729px;top:48.6px;color:#d0d0d0">平面.1</div>
<svg class="abs" style="left:781px;top:48.1px" width="9" height="9" viewBox="0 0 9 9"><rect width="9" height="9" fill="#8b8b8b"/><path d="M0.5 8.5L8.5 0.5" stroke="#3a3a3a" stroke-width="1"/></svg>
<div class="abs" style="left:794px;top:47.800000000000004px;width:4px;height:4px;border-radius:50%;background:#e8474c"></div>
<div class="abs" style="left:794px;top:54.400000000000006px;width:4px;height:4px;border-radius:50%;background:#7b7b7b"></div>
<svg class="abs" style="left:800px;top:49.1px" width="8" height="8" viewBox="0 0 8 8"><path d="M0.5 4.5L2.5 6.8L7.5 0.5" fill="none" stroke="#35e38a" stroke-width="1.1"/></svg>
<div class="t" style="left:729px;top:64.7px;color:#d0d0d0">平面</div>
<svg class="abs" style="left:781px;top:64.2px" width="9" height="9" viewBox="0 0 9 9"><rect width="9" height="9" fill="#8b8b8b"/><path d="M0.5 8.5L8.5 0.5" stroke="#3a3a3a" stroke-width="1"/></svg>
<div class="abs" style="left:794px;top:63.900000000000006px;width:4px;height:4px;border-radius:50%;background:#e8474c"></div>
<div class="abs" style="left:794px;top:70.5px;width:4px;height:4px;border-radius:50%;background:#7b7b7b"></div>
<svg class="abs" style="left:800px;top:65.2px" width="8" height="8" viewBox="0 0 8 8"><path d="M0.5 4.5L2.5 6.8L7.5 0.5" fill="none" stroke="#35e38a" stroke-width="1.1"/></svg>
<div class="t" style="left:729px;top:80.8px;color:#d0d0d0">背景</div>
<svg class="abs" style="left:781px;top:80.3px" width="9" height="9" viewBox="0 0 9 9"><rect width="9" height="9" fill="#8b8b8b"/><path d="M0.5 8.5L8.5 0.5" stroke="#3a3a3a" stroke-width="1"/></svg>
<div class="abs" style="left:794px;top:80.0px;width:4px;height:4px;border-radius:50%;background:#7b7b7b"></div>
<div class="abs" style="left:794px;top:86.6px;width:4px;height:4px;border-radius:50%;background:#7b7b7b"></div>
<div class="t" style="left:729px;top:96.9px;color:#d0d0d0">灯光.目标.1</div>
<svg class="abs" style="left:781px;top:96.4px" width="9" height="9" viewBox="0 0 9 9"><rect width="9" height="9" fill="#8b8b8b"/><path d="M0.5 8.5L8.5 0.5" stroke="#3a3a3a" stroke-width="1"/></svg>
<div class="abs" style="left:794px;top:96.10000000000001px;width:4px;height:4px;border-radius:50%;background:#7b7b7b"></div>
<div class="abs" style="left:794px;top:102.7px;width:4px;height:4px;border-radius:50%;background:#7b7b7b"></div>
<div class="t" style="left:729px;top:113px;color:#d0d0d0">天空</div>
<svg class="abs" style="left:781px;top:112.5px" width="9" height="9" viewBox="0 0 9 9"><rect width="9" height="9" fill="#8b8b8b"/><path d="M0.5 8.5L8.5 0.5" stroke="#3a3a3a" stroke-width="1"/></svg>
<div class="abs" style="left:794px;top:112.2px;width:4px;height:4px;border-radius:50%;background:#7b7b7b"></div>
<div class="abs" style="left:794px;top:118.8px;width:4px;height:4px;border-radius:50%;background:#7b7b7b"></div>
<svg class="abs" style="left:700px;top:28px" width="230" height="100" viewBox="700 28 230 100">
<defs>
<radialGradient id="ph" cx="0.4" cy="0.35" r="0.7"><stop offset="0" stop-color="#eaa050"/><stop offset="0.55" stop-color="#c9782a"/><stop offset="1" stop-color="#7a4412"/></radialGradient>
<radialGradient id="cy" cx="0.4" cy="0.35" r="0.75"><stop offset="0" stop-color="#8fe6f5"/><stop offset="0.6" stop-color="#55c2dc"/><stop offset="1" stop-color="#2f8aa8"/></radialGradient>
<radialGradient id="sk" cx="0.4" cy="0.35" r="0.75"><stop offset="0" stop-color="#c6dcf4"/><stop offset="1" stop-color="#86abd6"/></radialGradient>
<radialGradient id="wh" cx="0.5" cy="0.5" r="0.5"><stop offset="0" stop-color="#fff"/><stop offset="0.88" stop-color="#fdfdfd"/><stop offset="1" stop-color="#d8d8d8"/></radialGradient>
<radialGradient id="wh2" cx="0.5" cy="0.5" r="0.5"><stop offset="0" stop-color="#d8d8d8"/><stop offset="0.35" stop-color="#f4f4f4"/><stop offset="0.85" stop-color="#efefef"/><stop offset="1" stop-color="#c0c0c0"/></radialGradient>
<pattern id="chk" width="5" height="5" patternUnits="userSpaceOnUse"><rect width="5" height="5" fill="#7c7c7c"/><rect width="2.500" height="2.500" fill="#a8a8a8"/><rect x="2.500" y="2.500" width="2.500" height="2.500" fill="#a8a8a8"/></pattern>
<g id="phong"><circle cx="0" cy="0" r="2.900" fill="url(#ph)"/><circle cx="5.400" cy="5.500" r="3.100" fill="url(#ph)"/></g>
<g id="oclap"><path d="M0 1L10 0V3.800H0Z" fill="#222"/><path d="M1.200 .9L2.600 .8L3.400 3.500H2ZM4.600 .6L6 .5L6.800 3.500H5.400ZM8 .3L9.400 .1L10 2.500V3.500H8.800Z" fill="#f2f2f2"/><rect x="0.300" y="4.800" width="9.600" height="4.600" fill="#ee962c" stroke="#9a5a10" stroke-width="0.500"/><path d="M4 5.700L6.800 7.100L4 8.500Z" fill="#1a1a1a"/></g>
<g id="targ"><circle r="5.900" fill="#141414"/><circle r="4.500" fill="none" stroke="#8ea8f2" stroke-width="1.300"/><circle r="2.300" fill="none" stroke="#8ea8f2" stroke-width="1.100"/><circle r="1" fill="#050505"/></g>
<g id="mat"><rect x="-7.300" y="-7.200" width="14.600" height="14.400" fill="url(#chk)"/><circle r="6.700" fill="url(#wh)"/></g>
<g id="plane"><path d="M2 0.300L10.500 2.600L8 7.500L0 4.700Z" fill="#7cc3f6"/><path d="M1 2.500L9.300 5M4.800 1.100L2.800 5.700M7.700 1.900L5.500 6.600" stroke="#a9dbfb" stroke-width="0.500" fill="none"/></g>
</defs>
<!-- object icons -->
<path d="M716.800 34.600C716.800 32.500 723.200 32.500 723.200 34.600V40.600C723.200 42.800 716.800 42.800 716.800 40.600Z" fill="#7dc3f4"/><ellipse cx="720" cy="34.600" rx="3.100" ry="1.200" fill="#bfe3fb"/>
<use href="#plane" x="714.700" y="49.300"/>
<use href="#plane" x="714.700" y="65.400"/>
<rect x="715.800" y="79.400" width="9.600" height="6.700" fill="#b9dcfb"/><rect x="715.800" y="79.400" width="9.600" height="1.600" fill="#8fc2f0"/>
<circle cx="717.300" cy="87.300" r="3.500" fill="#e9e9e9" stroke="#8a8a8a" stroke-width="0.500"/><path d="M715.800 86H718.800M717.300 86V89.300" stroke="#777" stroke-width="0.800" fill="none"/>
<path d="M715.700 96.800V105H724.300" fill="none" stroke="#f0f0f0" stroke-width="1.300"/><ellipse cx="722.700" cy="99" rx="1.500" ry="2.300" fill="none" stroke="#cfe3fa" stroke-width="1.100"/>
<circle cx="719.600" cy="116.900" r="5.500" fill="url(#sk)"/><path d="M714.300 115H724.900M714.300 118.800H724.900M717.600 111.800V122M721.400 111.800V122" stroke="#dcebfa" stroke-width="0.400" opacity="0.700"/>
<!-- tags -->
<use href="#phong" x="814.700" y="33"/>
<use href="#oclap" x="812.600" y="47.600"/><use href="#targ" x="833.500" y="51.800"/><use href="#phong" x="846.500" y="49"/><use href="#mat" x="865.400" y="51.700"/><use href="#mat" x="881.400" y="51.700"/>
<use href="#oclap" x="812.600" y="63.700"/><use href="#targ" x="833.500" y="67.900"/><use href="#phong" x="846.500" y="65.100"/><use href="#mat" x="865.400" y="67.800"/><use href="#mat" x="881.400" y="67.800"/>
<rect x="810" y="76.600" width="15" height="14.500" fill="url(#chk)"/><circle cx="817.400" cy="83.600" r="6.600" fill="url(#cy)"/>
<use href="#oclap" x="812.600" y="111.900"/>
<rect x="826" y="108.400" width="14.600" height="14.400" fill="url(#chk)"/><circle cx="833.300" cy="115.600" r="6.600" fill="url(#wh2)"/>
</svg>
<div class="abs" style="left:700px;top:387.5px;width:230px;height:1px;background:#3a3a3a"></div>
<div class="abs" style="left:699px;top:388.5px;width:231px;height:4px;background:#464646"></div>

<!-- ATTRIBUTE MANAGER -->
<div class="abs" style="left:699px;top:392px;width:231px;height:291px;background:#474747;border-left:1px solid #5e5e5e;border-top:1px solid #5e5e5e"></div>
<svg class="abs grip" style="left:704px;top:397.5px" width="11" height="11" viewBox="0 0 11 11"><g fill="#9a9a9a"><rect x="0" y="0" width="1" height="1"/><rect x="2" y="0" width="1" height="1"/><rect x="4" y="0" width="1" height="1"/><rect x="6" y="0" width="1" height="1"/><rect x="8" y="0" width="1" height="1"/><rect x="0" y="2" width="1" height="1"/><rect x="2" y="2" width="1" height="1"/><rect x="4" y="2" width="1" height="1"/><rect x="6" y="2" width="1" height="1"/><rect x="8" y="2" width="1" height="1"/><rect x="0" y="4" width="1" height="1"/><rect x="2" y="4" width="1" height="1"/><rect x="4" y="4" width="1" height="1"/><rect x="6" y="4" width="1" height="1"/><rect x="8" y="4" width="1" height="1"/><rect x="0" y="6" width="1" height="1"/><rect x="2" y="6" width="1" height="1"/><rect x="4" y="6" width="1" height="1"/><rect x="6" y="6" width="1" height="1"/><rect x="8" y="6" width="1" height="1"/><rect x="0" y="8" width="1" height="1"/><rect x="2" y="8" width="1" height="1"/><rect x="4" y="8" width="1" height="1"/><rect x="6" y="8" width="1" height="1"/><rect x="8" y="8" width="1" height="1"/></g></svg>
<div class="t" style="left:721px;top:398.5px">模式</div>
<div class="t" style="left:749.5px;top:398.5px">编辑</div>
<div class="t" style="left:778px;top:398.5px">用户数据</div>
<div class="abs" style="left:700px;top:411.5px;width:230px;height:1px;background:#333"></div>
<div class="abs" style="left:700px;top:412.5px;width:230px;height:1px;background:#585858"></div>
<svg class="abs" style="left:706px;top:417px" width="10" height="14" viewBox="0 0 10 14"><path d="M0.7 2.2C0.7 0.2 9.3 0.2 9.3 2.2V11.3C9.3 13.4 0.7 13.4 0.7 11.3Z" fill="#7fc3f3"/><ellipse cx="5" cy="2.3" rx="4.2" ry="1.5" fill="#b9e0fb"/></svg>
<div class="t" style="left:722.5px;top:419.5px">圆柱对象 [圆柱]</div>
<div class="abs" style="left:702px;top:435px;width:75.5px;height:15.5px;background:#6a6a6a;border-radius:3px 0 0 3px;border:1px solid #3a3a3a;border-top-color:#7d7d7d"></div>
<div class="abs" style="left:778.5px;top:435px;width:75px;height:15.5px;background:#6a6a6a;border:1px solid #3a3a3a;border-top-color:#7d7d7d;border-left-color:#777"></div>
<div class="abs" style="left:854px;top:435px;width:76px;height:15.5px;background:#8ea7d2;border-bottom:1px solid #3a3a3a"></div>
<div class="t" style="left:730px;top:438px">基本</div>
<div class="t" style="left:806.5px;top:438px">坐标</div>
<div class="t" style="left:881.5px;top:438px;color:#111">对象</div>
<div class="abs" style="left:702px;top:455px;width:228px;height:13.5px;background:#303030"></div>
<div class="t t0" style="left:703.3px;top:457.5px;color:#e4e4e4">对象属性</div>
<div class="abs" style="left:702px;top:565px;width:228px;height:14px;background:#303030"></div>
<div class="t t0" style="left:703.3px;top:568px;color:#e4e4e4">封顶</div>
<div class="rad" style="left:703.5px;top:475.7px"></div>
<div class="t" style="left:717.5px;top:476.9px;color:#d0d0d0">半径 <span style="letter-spacing:2.600px;margin-left:1px"> ...</span></div>
<div class="fld" style="left:757px;top:473px;width:53px"><span>13.5 cm</span><svg class="sp" viewBox="0 0 4 8"><path d="M0 3L2 0L4 3ZM0 5L2 8L4 5Z" fill="#9a9a9a"/></svg></div>
<div class="rad" style="left:703.5px;top:494.2px"></div>
<div class="t" style="left:717.5px;top:495.4px;color:#d0d0d0">高度 <span style="letter-spacing:2.600px;margin-left:1px"> ...</span></div>
<div class="fld" style="left:757px;top:491.5px;width:53px"><span>722 cm</span><svg class="sp" viewBox="0 0 4 8"><path d="M0 3L2 0L4 3ZM0 5L2 8L4 5Z" fill="#9a9a9a"/></svg></div>
<div class="rad" style="left:703.5px;top:512.6px"></div>
<div class="t" style="left:717.5px;top:513.8px;color:#d0d0d0">高度分段</div>
<div class="fld" style="left:757px;top:509.9px;width:53px"><span>1</span><svg class="sp" viewBox="0 0 4 8"><path d="M0 3L2 0L4 3ZM0 5L2 8L4 5Z" fill="#9a9a9a"/></svg></div>
<div class="rad" style="left:703.5px;top:531.0px"></div>
<div class="t" style="left:717.5px;top:532.2px;color:#d0d0d0">旋转分段</div>
<div class="fld" style="left:757px;top:528.3px;width:53px"><span>36</span><svg class="sp" viewBox="0 0 4 8"><path d="M0 3L2 0L4 3ZM0 5L2 8L4 5Z" fill="#9a9a9a"/></svg></div>
<div class="rad" style="left:703.5px;top:548.5px"></div>
<div class="t" style="left:717.5px;top:549.7px;color:#d0d0d0">方向 <span style="letter-spacing:2.600px;margin-left:1px"> ...</span></div>
<div class="abs" style="left:756.5px;top:546.5px;width:57px;height:14.5px;border-radius:3px;background:linear-gradient(#7c7c7c,#5c5c5c);border:1px solid #3c3c3c;border-top-color:#8a8a8a"></div><div class="t" style="left:762.5px;top:549.5px;color:#dcdcdc">+Y</div><svg class="abs" style="left:803.5px;top:552.3px" width="6" height="4" viewBox="0 0 6 4"><path d="M0 0H6L3 3.6Z" fill="#e6e6e6"/></svg>
<div class="rad" style="left:703.5px;top:585.2px"></div>
<div class="t" style="left:717.5px;top:586.4px;color:#d0d0d0">封顶</div>
<div class="abs" style="left:738.5px;top:585.3px;width:10px;height:10px;background:#2a2a2a;border-radius:2.5px"></div><svg class="abs" style="left:739.5px;top:586.0px" width="9" height="9" viewBox="0 0 9 9"><path d="M1.200 4.600L3 7.700L8.500 0.800" fill="none" stroke="#f2f2f2" stroke-width="1.250"/></svg>
<div class="rad" style="left:703.5px;top:602.7px"></div>
<div class="t" style="left:717.5px;top:603.9px;color:#d0d0d0">分段</div>
<div class="fld" style="left:739px;top:600px;width:53px"><span>1</span><svg class="sp" viewBox="0 0 4 8"><path d="M0 3L2 0L4 3ZM0 5L2 8L4 5Z" fill="#9a9a9a"/></svg></div>
<div class="rad" style="left:703.5px;top:625.5px"></div>
<div class="t" style="left:717.5px;top:626.7px;color:#f0a21c">圆角</div>
<div class="abs" style="left:738.5px;top:625.5999999999999px;width:10px;height:10px;background:#2a2a2a;border-radius:2.5px"></div><svg class="abs" style="left:739.5px;top:626.3px" width="9" height="9" viewBox="0 0 9 9"><path d="M1.200 4.600L3 7.700L8.500 0.800" fill="none" stroke="#f2f2f2" stroke-width="1.250"/></svg>
<div class="rad" style="left:703.5px;top:643.3000000000001px"></div>
<div class="t" style="left:717.5px;top:644.5px;color:#d0d0d0">分段</div>
<div class="fld" style="left:739px;top:640.6px;width:53px"><span>5</span><svg class="sp" viewBox="0 0 4 8"><path d="M0 3L2 0L4 3ZM0 5L2 8L4 5Z" fill="#9a9a9a"/></svg></div>
<div class="rad" style="left:703.5px;top:661.7px"></div>
<div class="t" style="left:717.5px;top:662.9px;color:#d0d0d0">半径</div>
<div class="fld" style="left:739px;top:659px;width:53px"><span>3 cm</span><svg class="sp" viewBox="0 0 4 8"><path d="M0 3L2 0L4 3ZM0 5L2 8L4 5Z" fill="#9a9a9a"/></svg></div>
<div class="abs" style="left:696.200px;top:466px;width:126.600px;height:43.800px;border:2.500px solid #f80000"></div>
<div class="abs" style="left:715px;top:617px;width:91px;height:80px;border:2.400px solid #f80000"></div>
</div></div>
</body>
</html>
